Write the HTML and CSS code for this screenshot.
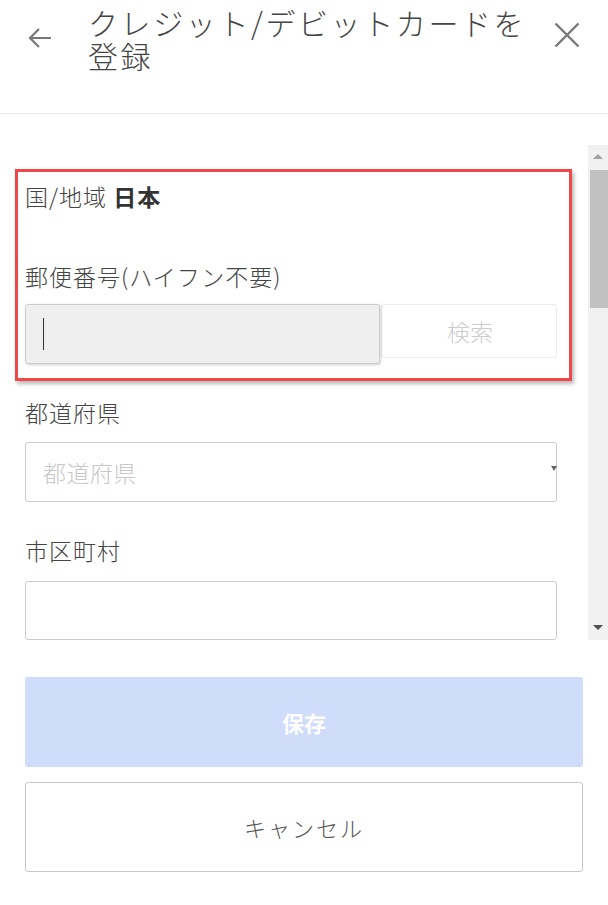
FILE: index.html
```html
<!DOCTYPE html>
<html lang="ja">
  <head>
    <meta charset="UTF-8" />
    <meta name="viewport" content="width=device-width, initial-scale=1.0" />
    <title>クレジット/デビットカードを登録</title>
    <link rel="stylesheet" href="styles.css">
  </head>
  <body>
    <div class="header">
      <button type="button" class="icon-btn back">
        <svg width="26" height="24" viewBox="0 0 26 24">
          <path d="M24 12H3M12 3L3 12l9 9" fill="none" stroke="#777" stroke-width="2.2" />
        </svg>
      </button>
      <h1 class="title">クレジット/デビットカードを登録</h1>
      <button type="button" class="icon-btn close">
        <svg width="26" height="26" viewBox="0 0 26 26">
          <path d="M1.5 1.5l23 23M24.5 1.5l-23 23" fill="none" stroke="#777" stroke-width="2.4" />
        </svg>
      </button>
    </div>

    <div class="scroll-wrap">
      <div class="scroll-content">
        <div class="highlight"></div>

        <div class="country">国/地域 <b>日本</b></div>

        <label class="label postal-label">郵便番号(ハイフン不要)</label>
        <div class="postal-row">
          <div class="input focused"><span class="caret"></span></div>
          <button type="button" class="search">検索</button>
        </div>

        <label class="label">都道府県</label>
        <div class="select">
          <span class="placeholder">都道府県</span>
          <span class="arrow"></span>
        </div>

        <label class="label">市区町村</label>
        <div class="input"></div>
      </div>
      <div class="scrollbar">
        <span class="sb-up"></span>
        <span class="sb-thumb"></span>
        <span class="sb-down"></span>
      </div>
    </div>

    <div class="actions">
      <button type="button" class="save">保存</button>
      <button type="button" class="cancel">キャンセル</button>
    </div>
  </body>
</html>
```

FILE: styles.css
```css
body {
  margin: 0;
  background-color: #ffffff;
  font-family: "Noto Sans CJK JP", "Noto Sans", sans-serif;
  font-weight: 300;
  color: #444444;
}

button {
  font-family: inherit;
  cursor: pointer;
}

.header {
  height: 114px;
  border-bottom: 1px solid #e6e6e6;
  display: flex;
  align-items: flex-start;
  box-sizing: border-box;
}

.icon-btn {
  background: none;
  border: none;
  padding: 0;
  display: flex;
}

.back {
  margin: 26px 0 0 27px;
}

.close {
  margin: 22px 28px 0 auto;
}

.title {
  margin: 6px 0 0 35px;
  width: 450px;
  font-size: 30px;
  font-weight: 300;
  line-height: 33px;
  letter-spacing: 2.6px;
  color: #444444;
}

.scroll-wrap {
  margin-top: 31px;
  height: 495px;
  display: flex;
}

.scroll-content {
  position: relative;
  flex: 1;
  overflow: hidden;
  padding: 36px 31px 0 25px;
  display: flex;
  flex-direction: column;
}

.highlight {
  position: absolute;
  left: 15px;
  top: 24px;
  width: 551px;
  height: 206px;
  border: 3px solid #f04848;
  box-shadow: 2px 3px 4px rgba(0, 0, 0, 0.28);
  pointer-events: none;
}

.country {
  font-size: 23px;
  line-height: 30px;
  letter-spacing: 1px;
}

.country b {
  font-weight: 700;
  color: #333333;
}

.label {
  font-size: 23px;
  line-height: 30px;
  letter-spacing: 1px;
  margin-top: 33px;
}

.postal-label {
  margin-top: 50px;
}

.postal-row {
  display: flex;
  align-items: flex-start;
  margin-top: 13px;
  flex-shrink: 0;
}

.input {
  height: 59px;
  margin-top: 16px;
  border: 1px solid #cccccc;
  border-radius: 3px;
  box-sizing: border-box;
  flex-shrink: 0;
}

.postal-row .input {
  margin-top: 0;
  width: 355px;
  height: 60px;
}

.input.focused {
  background-color: #efefef;
  box-shadow: 1px 1px 3px rgba(0, 0, 0, 0.18);
  position: relative;
}

.caret {
  position: absolute;
  left: 17px;
  top: 13px;
  width: 1px;
  height: 32px;
  background-color: #333333;
}

.search {
  flex: 1;
  height: 54px;
  margin-left: 1px;
  background: #ffffff;
  border: 1px solid #ececec;
  border-radius: 3px;
  font-size: 23px;
  font-weight: 300;
  color: #cccccc;
  padding: 0 0 0 2px;
}

.select {
  height: 60px;
  margin-top: 15px;
  border: 1px solid #cccccc;
  border-radius: 3px;
  box-sizing: border-box;
  display: flex;
  align-items: center;
  padding-left: 17px;
  position: relative;
  flex-shrink: 0;
}

.placeholder {
  font-size: 23px;
  letter-spacing: 0.5px;
  color: #c8c8c8;
}

.arrow {
  position: absolute;
  right: -1px;
  top: 23px;
  border-left: 3px solid transparent;
  border-right: 3px solid transparent;
  border-top: 5px solid #666666;
}

.scrollbar {
  width: 20px;
  background-color: #f1f1f1;
  position: relative;
}

.sb-up,
.sb-down {
  position: absolute;
  left: 5px;
  border-left: 5px solid transparent;
  border-right: 5px solid transparent;
}

.sb-up {
  top: 9px;
  border-bottom: 5px solid #a3a3a3;
}

.sb-down {
  bottom: 10px;
  border-top: 5px solid #505050;
}

.sb-thumb {
  position: absolute;
  left: 2px;
  right: 0;
  top: 25px;
  height: 138px;
  background-color: #c1c1c1;
}

.actions {
  padding: 37px 25px 0 25px;
  display: flex;
  flex-direction: column;
  gap: 15px;
}

.save,
.cancel {
  height: 90px;
  border-radius: 3px;
}

.save {
  background-color: #cfddfb;
  border: none;
  color: #ffffff;
  font-weight: 700;
  font-size: 22px;
}

.cancel {
  background-color: #ffffff;
  border: 1px solid #c8c8c8;
  color: #555555;
  font-weight: 300;
  font-size: 22px;
  letter-spacing: 2px;
}
```
